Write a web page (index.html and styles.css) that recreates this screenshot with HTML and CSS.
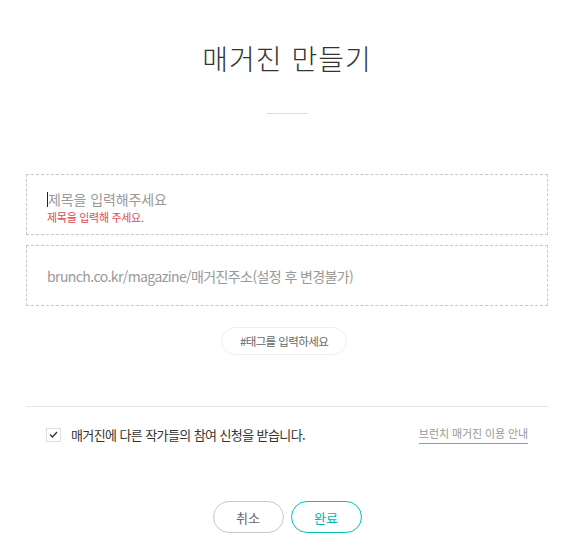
FILE: index.html
```html
<!DOCTYPE html>
<html lang="ko">
<head>
  <meta charset="UTF-8">
  <title>매거진 만들기</title>
  <link rel="stylesheet" href="styles.css">
</head>
<body>

<div class="wrap">
  <h1 class="title">매거진 만들기</h1>
  <div class="title-line"></div>

  <div class="field field-title">
    <div class="field-input"><span class="caret"></span><span class="placeholder">제목을 입력해주세요</span></div>
    <p class="field-error">제목을 입력해 주세요.</p>
  </div>

  <div class="field field-url">
    <span class="placeholder">brunch.co.kr/magazine/매거진주소(설정 후 변경불가)</span>
  </div>

  <div class="tag-row">
    <div class="tag-input">#태그를 입력하세요</div>
  </div>

  <div class="option-row">
    <label class="check">
      <span class="check-box">
        <svg width="9" height="7" viewBox="0 0 9 7"><path d="M1 3.5 L3.5 6 L8 1" fill="none" stroke="#333" stroke-width="1.3"/></svg>
      </span>
      <span class="check-text">매거진에 다른 작가들의 참여 신청을 받습니다.</span>
    </label>
    <a class="guide-link" href="#">브런치 매거진 이용 안내</a>
  </div>

  <div class="buttons">
    <button class="btn btn-cancel">취소</button>
    <button class="btn btn-done">완료</button>
  </div>
</div>

</body>
</html>
```

FILE: styles.css
```css
body {
  margin: 0;
  background: #fff;
  font-family: "Noto Sans CJK KR", "Noto Sans", sans-serif;
  color: #333;
}

.wrap {
  width: 522px;
  margin-left: 26px;
  padding-top: 40px;
}

.title {
  margin: 0;
  font-size: 28px;
  line-height: 36px;
  font-weight: 300;
  text-align: center;
  color: #333;
  letter-spacing: 1px;
}

.title-line {
  width: 41px;
  height: 1px;
  background: #ddd;
  margin: 37px auto 0;
}

.field {
  border: 1px dashed #c8c8c8;
  box-sizing: border-box;
}

.field-title {
  margin-top: 60px;
  height: 61px;
  padding: 14px 20px 0;
}

.field-input {
  display: flex;
  align-items: center;
  height: 20px;
}

.caret {
  width: 1px;
  height: 15px;
  background: #222;
}

.placeholder {
  font-size: 14px;
  color: #999;
  letter-spacing: -0.1px;
}

.field-error {
  margin: 0;
  font-size: 11px;
  line-height: 16px;
  color: #e04a55;
  letter-spacing: -0.3px;
}

.field-url {
  margin-top: 10px;
  height: 61px;
  padding: 0 20px;
  display: flex;
  align-items: center;
}

.field-url .placeholder {
  letter-spacing: -0.6px;
}

.tag-row {
  display: flex;
  justify-content: center;
  margin-top: 21px;
}

.tag-input {
  width: 126px;
  height: 28px;
  box-sizing: border-box;
  border: 1px solid #eee;
  border-radius: 14px;
  font-size: 11.5px;
  line-height: 26px;
  text-align: center;
  color: #666;
  letter-spacing: -0.6px;
  margin-right: 6px;
}

.option-row {
  margin-top: 51px;
  border-top: 1px solid #e5e5e5;
  padding: 18px 20px 0;
  display: flex;
  align-items: center;
  justify-content: space-between;
}

.check {
  display: flex;
  align-items: center;
}

.check-box {
  width: 15px;
  height: 14px;
  border: 1px solid #ddd;
  box-sizing: border-box;
  display: flex;
  align-items: center;
  justify-content: center;
  margin-right: 10px;
}

.check-text {
  font-size: 13px;
  color: #333;
  letter-spacing: -0.6px;
}

.guide-link {
  font-size: 11px;
  color: #999;
  text-decoration: none;
  border-bottom: 1px solid #999;
  padding-bottom: 2px;
  letter-spacing: -0.1px;
}

.buttons {
  display: flex;
  justify-content: center;
  gap: 7px;
  margin-top: 57px;
}

.btn {
  width: 71px;
  height: 32px;
  border-radius: 16px;
  background: #fff;
  font-family: inherit;
  font-size: 13px;
  cursor: pointer;
}

.btn-cancel {
  border: 1px solid #c8c8c8;
  color: #666;
}

.btn-done {
  border: 1px solid #00c3bd;
  color: #00b6b0;
}
```
